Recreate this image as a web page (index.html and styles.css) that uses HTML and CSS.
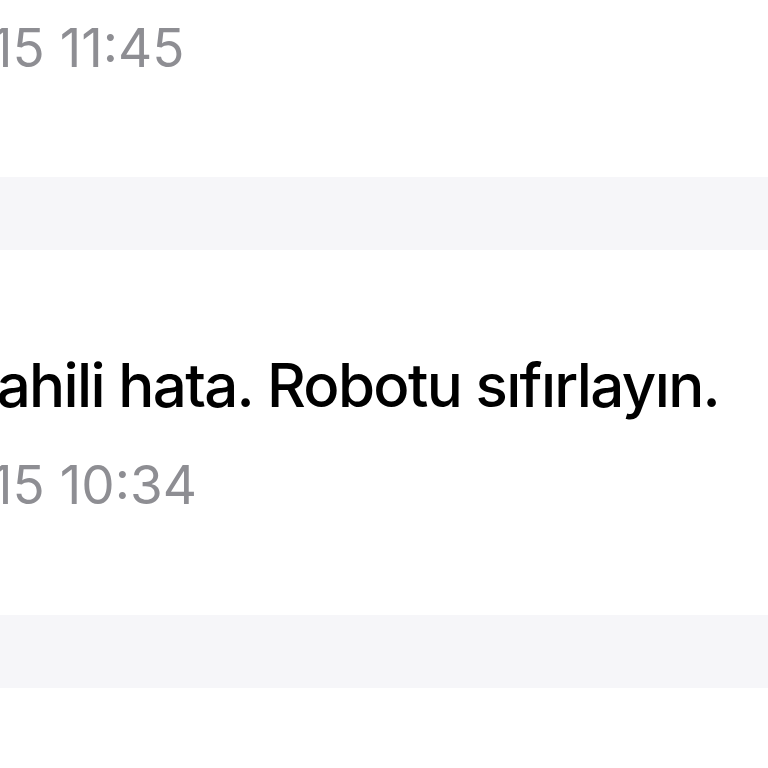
FILE: index.html
```html
<!DOCTYPE html>
<html lang="tr">
<head>
<meta charset="utf-8">
<link rel="stylesheet" href="styles.css">
</head>
<body>
<div class="list">
  <div class="item item-first">
    <div class="time">15 11:45</div>
  </div>
  <div class="sep"></div>
  <div class="item item-msg">
    <div class="msg">Dahili hata. Robotu sıfırlayın.</div>
    <div class="time time-msg">15 10:34</div>
  </div>
  <div class="sep"></div>
  <div class="item item-last"></div>
</div>
</body>
</html>
```
FILE: styles.css
```css
html, body {
  margin: 0;
  padding: 0;
  background: #ffffff;
  overflow: hidden;
}
body {
  font-family: Inter, "Liberation Sans", sans-serif;
  width: 768px;
  height: 768px;
}
.list {
  display: flex;
  flex-direction: column;
}
.item {
  background: #ffffff;
  overflow: hidden;
  white-space: nowrap;
}
.item-first {
  height: 177px;
  display: flex;
  flex-direction: column;
}
.item-msg {
  height: 365px;
  display: flex;
  flex-direction: column;
  padding-top: 87px;
  box-sizing: border-box;
}
.item-last {
  height: 80px;
}
.sep {
  height: 73px;
  background: #f6f6f9;
}
.time {
  font-size: 53px;
  line-height: 96px;
  color: #8e8e93;
  margin-left: -9px;
}
.time-msg {
  margin-top: 4px;
}
.msg {
  font-size: 60px;
  font-weight: 500;
  line-height: 96px;
  letter-spacing: -1.65px;
  color: #000000;
  margin-left: -45px;
}
```
